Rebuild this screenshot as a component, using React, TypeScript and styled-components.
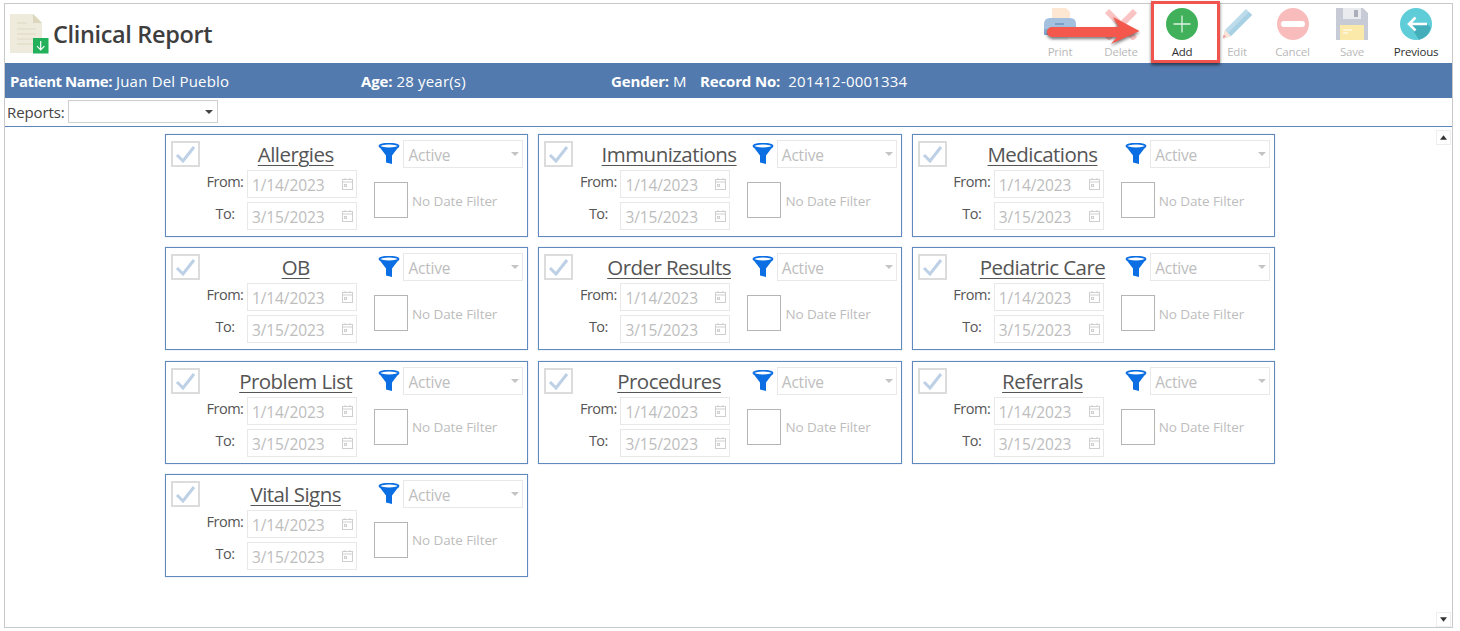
import React from "react";
import styled, { createGlobalStyle } from "styled-components";

const Global = createGlobalStyle`
  html, body { margin: 0; padding: 0; background: #fff; }
  body { font-family: "Open Sans", "Noto Sans", "Liberation Sans", sans-serif; overflow: hidden; }
`;

const Frame = styled.div`
  position: relative;
  box-sizing: border-box;
  width: 1449px;
  height: 625px;
  margin: 3px 0 0 4px;
  border: 1px solid #c9c9c9;
  display: flex;
  flex-direction: column;
`;
const Header = styled.header`
  height: 59px;
  display: flex;
  justify-content: space-between;
  flex: none;
`;
const Brand = styled.div`
  display: flex;
  align-items: flex-start;
  padding: 10px 0 0 5px;
`;
const Title = styled.h1`
  margin: 4px 0 0 4px;
  font-size: 23.5px;
  line-height: 32px;
  font-weight: 600;
  letter-spacing: -0.35px;
  color: #3e3e3e;
`;
const Toolbar = styled.nav`
  display: flex;
  margin-right: 1px;
`;
const ToolItem = styled.div<{ $w: number; $off?: boolean }>`
  width: ${(p) => p.$w}px;
  display: flex;
  flex-direction: column;
  align-items: center;
  padding-top: 4px;
  font-size: 11.5px;
  line-height: 16px;
  letter-spacing: -0.2px;
  color: ${(p) => (p.$off ? "#b9b9b9" : "#2f2f2f")};
  svg { display: block; width: 32px; height: 32px; margin-bottom: 4px; }
`;
const PatientBar = styled.div`
  flex: none;
  box-sizing: border-box;
  height: 35px;
  padding: 1px 0 0 5px;
  background: #527aae;
  color: #fff;
  display: flex;
  align-items: center;
  font-size: 15px;
  letter-spacing: 0.2px;
`;
const Field = styled.div<{ $w: number; $gap?: number; $track?: number }>`
  width: ${(p) => p.$w}px;
  flex: none;
  white-space: nowrap;
  b {
    font-weight: 700;
    margin-right: ${(p) => p.$gap ?? 4}px;
    letter-spacing: ${(p) => p.$track ?? -0.15}px;
  }
`;
const ReportsRow = styled.div`
  flex: none;
  height: 28px;
  box-sizing: content-box;
  border-bottom: 1px solid #5a86bb;
  display: flex;
  align-items: center;
  padding-left: 2px;
  font-size: 15px;
  letter-spacing: -0.1px;
  color: #444;
`;
const ReportSelect = styled.div`
  position: relative;
  box-sizing: border-box;
  width: 150px;
  height: 23px;
  margin: -1px 0 0 3px;
  border: 1px solid #cfcfcf;
`;
const Caret = styled.i<{ $c: string; $r: number }>`
  position: absolute;
  right: ${(p) => p.$r}px;
  top: 50%;
  margin-top: -2px;
  border-left: 4px solid transparent;
  border-right: 4px solid transparent;
  border-top: 4px solid ${(p) => p.$c};
`;
const Body = styled.div`
  flex: 1;
  display: flex;
  min-height: 0;
`;
const Main = styled.main`
  flex: 1;
  padding: 7px 0 0 160px;
`;
const Grid = styled.div`
  display: grid;
  grid-template-columns: repeat(3, 363.4px);
  grid-auto-rows: 103px;
  column-gap: 10px;
  row-gap: 10.33px;
`;
const Card = styled.section`
  box-sizing: border-box;
  border: 1px solid #6089bd;
  box-shadow: 0 0 1px #a9c2e0;
`;
const CardTop = styled.div`
  display: flex;
  height: 28px;
  padding: 5px 4px 0 5px;
`;
const Tick = styled.div`
  flex: none;
  box-sizing: border-box;
  width: 29px;
  height: 26px;
  margin-top: 1px;
  border: 2px solid #dcdcdc;
  display: flex;
  align-items: center;
  justify-content: center;
  svg { width: 21px; height: 18px; }
`;
const CardTitle = styled.div`
  flex: 1;
  padding-left: 13px;
  margin-top: -1px;
  text-align: center;
  font-size: 20.5px;
  line-height: 30px;
  letter-spacing: -0.55px;
  color: #555;
  white-space: nowrap;
  span { text-decoration: underline; text-decoration-thickness: 1px; text-underline-offset: 3px; }
`;
const Funnel = styled.svg`
  flex: none;
  width: 22px;
  height: 22px;
  margin: 3px 3px 0 0;
`;
const FilterSelect = styled.div`
  position: relative;
  flex: none;
  box-sizing: border-box;
  width: 120px;
  height: 28px;
  padding: 1px 0 0 4px;
  border: 1px solid #e8e8e8;
  font-size: 15.5px;
  line-height: 26px;
  letter-spacing: -0.2px;
  color: #bdbdbd;
`;
const CardBody = styled.div`
  display: flex;
  align-items: center;
  margin-top: 2px;
  padding-left: 40px;
`;
const Dates = styled.div`
  display: grid;
  grid-template-columns: 38px 110px;
  column-gap: 3px;
  row-gap: 4px;
  width: 151px;
`;
const DateLabel = styled.label`
  text-align: center;
  font-size: 14.5px;
  line-height: 24px;
  letter-spacing: -0.5px;
  color: #555;
`;
const DateBox = styled.div`
  box-sizing: border-box;
  height: 28px;
  border: 1px solid #e8e8e8;
  display: flex;
  align-items: center;
  justify-content: space-between;
  padding: 2px 2px 0 4px;
  font-size: 15.5px;
  letter-spacing: -0.1px;
  color: #bdbdbd;
  svg { width: 13px; height: 13px; margin-top: -3px; }
`;
const NoDate = styled.div`
  display: flex;
  align-items: center;
  margin-left: 17px;
  padding-top: 1px;
  font-size: 13.5px;
  letter-spacing: -0.1px;
  color: #bdbdbd;
`;
const EmptyCheck = styled.div`
  box-sizing: border-box;
  width: 34px;
  height: 36px;
  margin: -1px 4px 0 0;
  border: 1px solid #b5b5b5;
`;
const Scrollbar = styled.aside`
  flex: none;
  box-sizing: border-box;
  width: 16px;
  padding: 3px 0 0;
  display: flex;
  flex-direction: column;
  justify-content: space-between;
`;
const ScrollButton = styled.div`
  box-sizing: border-box;
  width: 15px;
  height: 15px;
  border: 1px solid #eeeeee;
  display: flex;
  align-items: center;
  justify-content: center;
  svg { width: 7px; height: 5px; fill: #333; }
`;
const Highlight = styled.div`
  position: absolute;
  left: 1146px;
  top: -3px;
  box-sizing: border-box;
  width: 69px;
  height: 62px;
  border: 3px solid #f0544c;
  box-shadow: 0 2px 3px rgba(0, 0, 0, 0.55);
  pointer-events: none;
`;
const Arrow = styled.svg`
  position: absolute;
  left: 1042px;
  top: 11px;
  width: 98px;
  height: 38px;
  overflow: visible;
  pointer-events: none;
  filter: drop-shadow(0 2px 1.5px rgba(0, 0, 0, 0.5));
`;

const DocIcon = () => (
  <svg width="39" height="40" viewBox="0 0 39 40" style={{ display: "block" }}>
    <path d="M0 0h23l9 9v30H0z" fill="#efebdc" />
    <path d="M23 0l9 9h-9z" fill="#dcd6bd" />
    <path d="M7 9h10M7 15h19M7 20h19M7 25h19M7 30h19" stroke="#dfd9c4" strokeWidth="1.2" />
    <rect x="23" y="24" width="15.5" height="15.5" fill="#22b05a" />
    <path d="M30.7 27v9M27 32.2l3.7 3.8 3.7-3.8" stroke="#fff" strokeWidth="1.2" fill="none" />
  </svg>
);
const PrintIcon = () => (
  <svg viewBox="0 0 32 32">
    <path d="M8 0h14l4 4v10H8z" fill="#fde6d2" />
    <path d="M0 16q0-6 6-6h20q6 0 6 6v11H0z" fill="#a3c0df" />
    <rect x="0" y="21" width="32" height="6" fill="#8aabd0" />
    <rect x="8" y="24" width="16" height="8" fill="#eef1f6" />
    <path d="M11 16h9" stroke="#6f93bc" strokeWidth="1.5" />
  </svg>
);
const DeleteIcon = () => (
  <svg viewBox="0 0 32 32">
    <path d="M2 3l28 28M30 3L2 31" stroke="#fbc4c4" strokeWidth="6" />
  </svg>
);
const AddIcon = () => (
  <svg viewBox="0 0 32 32">
    <circle cx="16" cy="16" r="16" fill="#41b05a" />
    <path d="M16 7.5v17M7.5 16h17" stroke="#dff3e3" strokeWidth="1.3" />
  </svg>
);
const EditIcon = () => (
  <svg viewBox="0 0 32 32">
    <path d="M25 1l6 6L10 28 2 31l2-9z" fill="#bcdcec" />
    <path d="M4 22l6 6-8 3z" fill="#fbe3d5" />
    <path d="M1.6 30l1.2-3.5 2.4 2.3z" fill="#e9a0a0" />
    <path d="M10 28L31 7l-3-3L7 25z" fill="#a8d0e4" />
  </svg>
);
const CancelIcon = () => (
  <svg viewBox="0 0 32 32">
    <circle cx="16" cy="16" r="16" fill="#f9bcbd" />
    <rect x="4" y="13" width="24" height="6" rx="3" fill="#fff" />
  </svg>
);
const SaveIcon = () => (
  <svg viewBox="0 0 32 32">
    <path d="M0 0h27l5 5v27H0z" fill="#c7cbd5" />
    <rect x="7" y="0" width="18" height="11" fill="#e9ebef" />
    <rect x="18" y="2" width="4" height="7" fill="#a9aeba" />
    <rect x="4" y="17" width="24" height="15" fill="#fbe9a9" />
    <path d="M7 22h9M7 25h5" stroke="#fff" strokeWidth="1.2" />
  </svg>
);
const PrevIcon = () => (
  <svg viewBox="0 0 32 32">
    <circle cx="16" cy="16" r="16" fill="#5fcdd8" />
    <path d="M14 24l-6-8h19l3.8 3.5A16 16 0 0 1 19 31.7z" fill="#45aebb" />
    <path d="M27 16H9M15.5 9.5L9 16l6.5 6.5" stroke="#fff" strokeWidth="2.6" fill="none" />
  </svg>
);
const CalendarIcon = () => (
  <svg viewBox="0 0 13 13" fill="none" stroke="#cfcfcf">
    <rect x="1.5" y="2.5" width="10" height="10" />
    <path d="M1.5 5h10M4 1v2M9 1v2" />
    <rect x="3.5" y="7.5" width="2" height="2" />
  </svg>
);

const tools = [
  { label: "Print", w: 60, off: true, icon: <PrintIcon /> },
  { label: "Delete", w: 62, off: true, icon: <DeleteIcon /> },
  { label: "Add", w: 60, off: false, icon: <AddIcon /> },
  { label: "Edit", w: 50, off: true, icon: <EditIcon /> },
  { label: "Cancel", w: 61, off: true, icon: <CancelIcon /> },
  { label: "Save", w: 58, off: true, icon: <SaveIcon /> },
  { label: "Previous", w: 70, off: false, icon: <PrevIcon /> },
];

const reports = [
  "Allergies", "Immunizations", "Medications", "OB", "Order Results",
  "Pediatric Care", "Problem List", "Procedures", "Referrals", "Vital Signs",
];

const ReportCard = ({ name }: { name: string }) => (
  <Card>
    <CardTop>
      <Tick>
        <svg viewBox="0 0 21 18">
          <path d="M2 10l6 6L19 2" fill="none" stroke="#bdd0e6" strokeWidth="3" />
        </svg>
      </Tick>
      <CardTitle><span>{name}</span></CardTitle>
      <Funnel viewBox="0 0 22 22">
        <ellipse cx="11" cy="3" rx="9.5" ry="2.3" fill="none" stroke="#0b6fe3" strokeWidth="1.8" />
        <path d="M1.5 4q9.5 3.5 19 0L14 12.5V21l-6-1.5v-7z" fill="#0b6fe3" />
      </Funnel>
      <FilterSelect>
        Active
        <Caret $c="#c4c4c4" $r={3} />
      </FilterSelect>
    </CardTop>
    <CardBody>
      <Dates>
        <DateLabel>From:</DateLabel>
        <DateBox>1/14/2023<CalendarIcon /></DateBox>
        <DateLabel>To:</DateLabel>
        <DateBox>3/15/2023<CalendarIcon /></DateBox>
      </Dates>
      <NoDate>
        <EmptyCheck />
        No Date Filter
      </NoDate>
    </CardBody>
  </Card>
);

export default function App() {
  return (
    <>
      <Global />
      <Frame>
        <Header>
          <Brand>
            <DocIcon />
            <Title>Clinical Report</Title>
          </Brand>
          <Toolbar>
            {tools.map((t) => (
              <ToolItem key={t.label} $w={t.w} $off={t.off}>
                {t.icon}
                {t.label}
              </ToolItem>
            ))}
          </Toolbar>
        </Header>
        <PatientBar>
          <Field $w={351} $track={-0.45}><b>Patient Name:</b>Juan Del Pueblo</Field>
          <Field $w={250}><b>Age:</b>28 year(s)</Field>
          <Field $w={89}><b>Gender:</b>M</Field>
          <Field $w={300} $gap={8}><b>Record No:</b>201412-0001334</Field>
        </PatientBar>
        <ReportsRow>
          Reports:
          <ReportSelect><Caret $c="#444" $r={4} /></ReportSelect>
        </ReportsRow>
        <Body>
          <Main>
            <Grid>
              {reports.map((r) => <ReportCard key={r} name={r} />)}
            </Grid>
          </Main>
          <Scrollbar>
            <ScrollButton><svg viewBox="0 0 9 6"><path d="M4.5 0L9 6H0z" /></svg></ScrollButton>
            <ScrollButton><svg viewBox="0 0 9 6"><path d="M0 0h9L4.5 6z" /></svg></ScrollButton>
          </Scrollbar>
        </Body>
        <Highlight />
        <Arrow viewBox="0 0 98 38">
          <path d="M5 12H72L66 2L92.5 16L64 29L70 22H5a5 5 0 0 1 0-10z" fill="#f4574c" />
        </Arrow>
      </Frame>
    </>
  );
}
